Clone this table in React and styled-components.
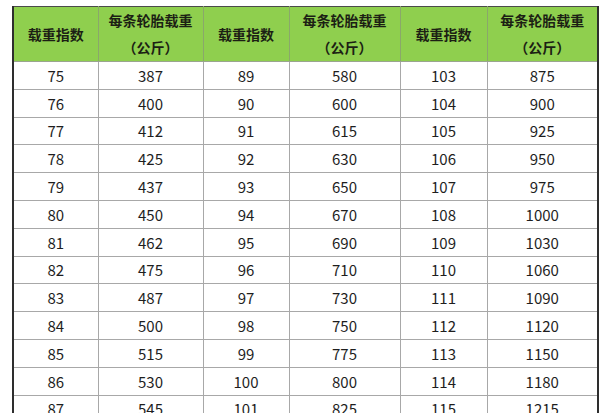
import React from "react";
import styled, { createGlobalStyle } from "styled-components";

const Global = createGlobalStyle`
  html, body { margin: 0; padding: 0; background: #fff; }
  body { font-family: "Noto Sans CJK SC", "Noto Sans", sans-serif; }
`;

const Page = styled.div`
  width: 608px;
  height: 413px;
  overflow: hidden;
  padding: 6px 0 0 12px;
  box-sizing: border-box;
  background: #fff;
`;

const Table = styled.table`
  width: 585px;
  table-layout: fixed;
  border-collapse: collapse;
  border-top: 1px solid #4a4a4a;
  border-left: 2px solid #2e2e2e;
  border-right: 2px solid #2e2e2e;
`;

const HeadCell = styled.th`
  background: #8fcf4e;
  color: #1c1f14;
  font-weight: 700;
  font-size: 14px;
  line-height: 27px;
  height: 54px;
  padding: 0;
  text-align: center;
  vertical-align: middle;
  border: 1px solid #8aa86a;
  border-top: none;
  border-bottom: 1px solid #9aa58f;
`;

const Cell = styled.td`
  height: 26.8px;
  padding: 0;
  text-align: center;
  vertical-align: middle;
  font-size: 15px;
  color: #1e1e1e;
  border: 1px solid #a8a8a8;
`;

const cols = [85, 105, 86, 111, 87, 111];

const data = [
  [75, 387, 89, 580, 103, 875],
  [76, 400, 90, 600, 104, 900],
  [77, 412, 91, 615, 105, 925],
  [78, 425, 92, 630, 106, 950],
  [79, 437, 93, 650, 107, 975],
  [80, 450, 94, 670, 108, 1000],
  [81, 462, 95, 690, 109, 1030],
  [82, 475, 96, 710, 110, 1060],
  [83, 487, 97, 730, 111, 1090],
  [84, 500, 98, 750, 112, 1120],
  [85, 515, 99, 775, 113, 1150],
  [86, 530, 100, 800, 114, 1180],
  [87, 545, 101, 825, 115, 1215],
];

export default function App() {
  return (
    <Page>
      <Global />
      <Table>
        <colgroup>
          {cols.map((w, i) => (
            <col key={i} style={{ width: w }} />
          ))}
        </colgroup>
        <thead>
          <tr>
            {[0, 1, 2].map((i) => (
              <React.Fragment key={i}>
                <HeadCell>载重指数</HeadCell>
                <HeadCell>
                  每条轮胎载重
                  <br />
                  （公斤）
                </HeadCell>
              </React.Fragment>
            ))}
          </tr>
        </thead>
        <tbody>
          {data.map((row, r) => (
            <tr key={r}>
              {row.map((v, c) => (
                <Cell key={c}>{v}</Cell>
              ))}
            </tr>
          ))}
        </tbody>
      </Table>
    </Page>
  );
}
